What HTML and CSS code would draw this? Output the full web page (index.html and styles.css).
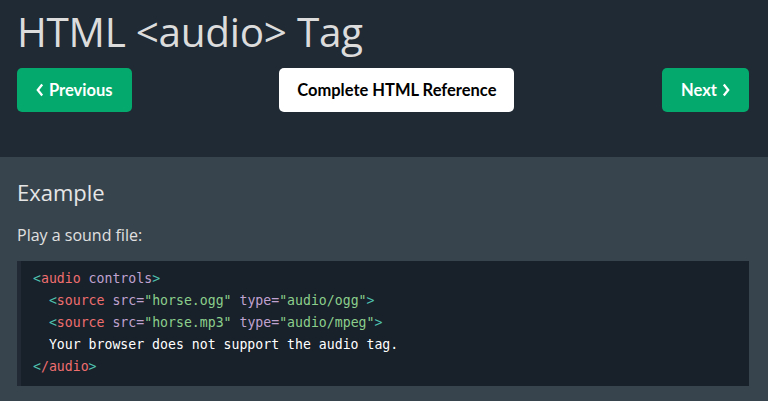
FILE: index.html
```html
<!DOCTYPE html>
<html lang="en">
<head>
  <meta charset="UTF-8">
  <meta name="viewport" content="width=device-width, initial-scale=1.0">
  <title>HTML audio Tag</title>
  <link rel="stylesheet" href="styles.css">
</head>
<body>
  <header class="page-head">
    <h1>HTML &lt;audio&gt; Tag</h1>

    <!-- Prev / reference / next navigation -->
    <div class="nav-row">
      <a href="#" class="btn btn-green">
        <svg class="chev" width="8" height="14" viewBox="0 0 8 14"><path d="M6.2 1.5 1.8 7l4.4 5.5" fill="none" stroke="#fff" stroke-width="2.3"/></svg>
        Previous
      </a>
      <a href="#" class="btn btn-white">Complete HTML Reference</a>
      <a href="#" class="btn btn-green">
        Next
        <svg class="chev" width="8" height="14" viewBox="0 0 8 14"><path d="M1.8 1.5 6.2 7l-4.4 5.5" fill="none" stroke="#fff" stroke-width="2.3"/></svg>
      </a>
    </div>
  </header>

  <section class="example">
    <h2>Example</h2>
    <p>Play a sound file:</p>
    <div class="code-block"><span class="tb">&lt;</span><span class="tn">audio</span><span class="at"> controls</span><span class="tb">&gt;</span>
  <span class="tb">&lt;</span><span class="tn">source</span><span class="at"> src=</span><span class="av">"horse.ogg"</span><span class="at"> type=</span><span class="av">"audio/ogg"</span><span class="tb">&gt;</span>
  <span class="tb">&lt;</span><span class="tn">source</span><span class="at"> src=</span><span class="av">"horse.mp3"</span><span class="at"> type=</span><span class="av">"audio/mpeg"</span><span class="tb">&gt;</span>
  Your browser does not support the audio tag.
<span class="tb">&lt;</span><span class="tn">/audio</span><span class="tb">&gt;</span></div>
  </section>
</body>
</html>
```

FILE: styles.css
```css
/* Reset */
*,
*::before,
*::after {
  box-sizing: border-box;
  margin: 0;
  padding: 0;
}

body {
  font-family: "Open Sans", "Noto Sans", Arial, sans-serif;
  background-color: #1f2a35;
  color: #dddddd;
}

/* Header with title and nav buttons */
.page-head {
  padding: 4px 19px 45px 17px;
}

.page-head h1 {
  font-size: 40.5px;
  font-weight: 400;
  line-height: 56px;
  letter-spacing: -0.3px;
  color: #dcdcdc;
}

.nav-row {
  display: flex;
  justify-content: space-between;
  align-items: center;
  margin-top: 8px;
}

.btn {
  display: inline-flex;
  align-items: center;
  gap: 5px;
  height: 44px;
  padding: 0 18px;
  border-radius: 5px;
  font-family: Lato, "Noto Sans", sans-serif;
  font-size: 16.5px;
  font-weight: 700;
  text-decoration: none;
}

.btn-green {
  background-color: #04aa6d;
  color: #ffffff;
  padding: 0 19px;
}

.btn-white {
  background-color: #ffffff;
  color: #000000;
}

.chev {
  display: block;
}

/* Example box */
.example {
  background-color: #38444d;
  padding: 18px 19px 16px 17px;
  min-height: 260px;
}

.example h2 {
  font-size: 22px;
  font-weight: 400;
  line-height: 34px;
  color: #e6e6e6;
}

.example p {
  font-size: 16px;
  margin-top: 15px;
  color: #e0e0e0;
}

.code-block {
  margin-top: 15px;
  background-color: #18202a;
  border-left: 4px solid #222b35;
  padding: 7px 12px 8px 12px;
  font-family: "DejaVu Sans Mono", "Liberation Mono", monospace;
  font-size: 13.2px;
  line-height: 22px;
  white-space: pre;
  color: #ffffff;
}

.tb { color: #4fc3b0; }
.tn { color: #ef6f6f; }
.at { color: #c0a3d0; }
.av { color: #8ccf8c; }
```
